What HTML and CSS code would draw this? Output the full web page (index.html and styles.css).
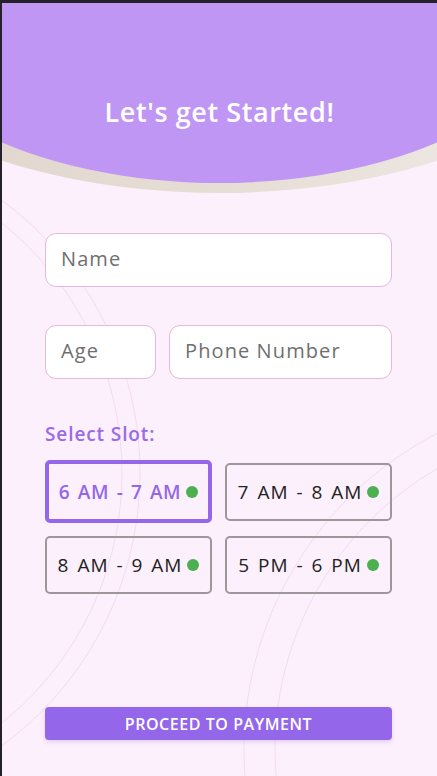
FILE: index.html
```html
<!DOCTYPE html>
<html lang="en">
<head>
<meta charset="utf-8">
<title>Let's get Started</title>
<link rel="stylesheet" href="styles.css">
</head>
<body>
<div class="screen">
  <svg class="deco" width="435" height="773" viewBox="0 0 435 773" aria-hidden="true">
    <circle cx="-200" cy="470" r="320" />
    <circle cx="-200" cy="470" r="338" />
    <circle cx="598" cy="747" r="356" />
    <circle cx="598" cy="747" r="325" />
  </svg>
  <header class="hero">
    <div class="hero-shade"></div>
    <div class="hero-fill">
      <h1 class="hero-title">Let's get Started!</h1>
    </div>
  </header>
  <main class="content">
    <input class="field" type="text" placeholder="Name">
    <div class="field-row">
      <input class="field field-age" type="text" placeholder="Age">
      <input class="field field-phone" type="text" placeholder="Phone Number">
    </div>
    <h2 class="section-label">Select Slot:</h2>
    <div class="slots">
      <button class="slot slot-selected" type="button"><span>6 AM - 7 AM</span><i class="dot"></i></button>
      <button class="slot" type="button"><span>7 AM - 8 AM</span><i class="dot"></i></button>
      <button class="slot" type="button"><span>8 AM - 9 AM</span><i class="dot"></i></button>
      <button class="slot" type="button"><span>5 PM - 6 PM</span><i class="dot"></i></button>
    </div>
    <button class="proceed" type="button">PROCEED TO PAYMENT</button>
  </main>
</div>
</body>
</html>
```
FILE: styles.css
```css
* { box-sizing: border-box; }

html, body {
  margin: 0;
  padding: 0;
  background: #25202a;
}

body {
  font-family: "Open Sans", "Noto Sans", sans-serif;
  overflow: hidden;
}

.screen {
  position: relative;
  margin: 3px 0 0 2px;
  width: 435px;
  height: 773px;
  background: #fcf0fc;
  overflow: hidden;
}

.deco {
  position: absolute;
  left: 0;
  top: 0;
  fill: none;
  stroke: #f0d3ea;
  stroke-width: 1;
  opacity: 0.65;
}

.hero {
  position: relative;
  height: 190px;
}

.hero-shade {
  position: absolute;
  inset: 0;
  background: linear-gradient(90deg, #e2d8cf 0%, #e6ddd5 50%, #ece6e0 100%);
  clip-path: ellipse(390px 190px at 50% 0);
}

.hero-fill {
  position: absolute;
  left: 0;
  right: 0;
  top: 0;
  height: 180px;
  background: #bf96f3;
  clip-path: ellipse(344px 180px at 50% 0);
  padding-top: 91px;
}

.hero-title {
  margin: 0;
  text-align: center;
  color: #fff;
  font-size: 27px;
  line-height: 36px;
  font-weight: 600;
  letter-spacing: 0.6px;
}

.content {
  position: relative;
  padding: 40px 45px 0 43px;
}

.field {
  display: block;
  width: 100%;
  height: 54px;
  border: 1px solid #e9b7dc;
  border-radius: 11px;
  background: #fff;
  padding: 0 15px 4px;
  font-family: inherit;
  font-size: 20px;
  letter-spacing: 1.1px;
  color: #333;
  outline: none;
}

.field::placeholder {
  color: #6f6f6f;
}

.field-row {
  display: flex;
  gap: 13px;
  margin-top: 38px;
}

.field-age {
  flex: 0 0 111px;
  width: 111px;
}

.field-phone {
  flex: 1 1 auto;
  width: auto;
  min-width: 0;
}

.section-label {
  margin: 43px 0 0;
  font-size: 19px;
  line-height: 24px;
  font-weight: 600;
  letter-spacing: 0.9px;
  color: #9a6ae8;
}

.slots {
  margin-top: 14px;
  display: grid;
  grid-template-columns: 1fr 1fr;
  gap: 13px;
  align-items: center;
}

.slot {
  height: 58px;
  border: 2px solid #9d979c;
  border-radius: 5px;
  background: transparent;
  display: flex;
  align-items: center;
  justify-content: center;
  gap: 5px;
  padding: 0;
  font-family: inherit;
  font-size: 19px;
  letter-spacing: 1px;
  word-spacing: 2px;
  color: #222;
  cursor: pointer;
}

.slot-selected {
  height: 63px;
  border: 4px solid #9466ea;
  color: #9466ea;
  font-weight: 600;
  letter-spacing: 0.6px;
}

.dot {
  width: 12px;
  height: 12px;
  border-radius: 50%;
  background: #4caf50;
  flex: none;
}

.proceed {
  display: block;
  width: 100%;
  height: 33px;
  margin-top: 113px;
  border: none;
  border-radius: 4px;
  background: #9466ea;
  color: #fff;
  font-family: inherit;
  font-size: 16px;
  font-weight: 600;
  letter-spacing: 0.55px;
  box-shadow: 0 2px 4px rgba(148, 102, 234, 0.25);
  cursor: pointer;
}
```
